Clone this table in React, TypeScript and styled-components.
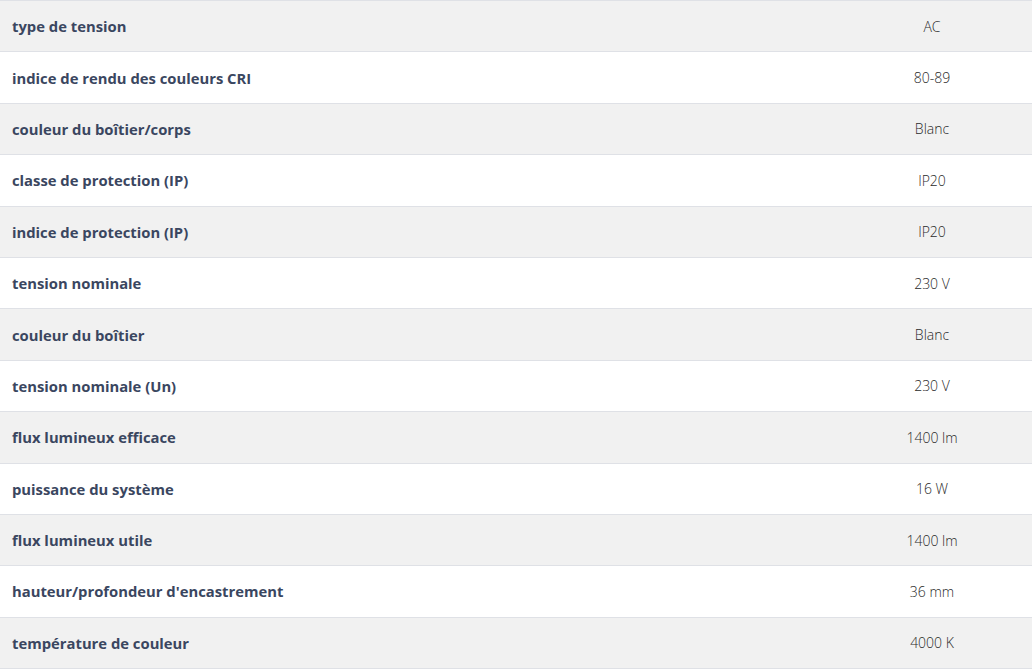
import React from "react";
import styled, { createGlobalStyle } from "styled-components";

const Global = createGlobalStyle`
  html, body { margin: 0; padding: 0; background: #fff; }
  body { font-family: "Open Sans", "Noto Sans", Arial, sans-serif; }
`;

const Table = styled.div`
  width: 1032px;
  border-top: 1px solid #dfe1e6;
`;

const Row = styled.div<{ $alt: boolean }>`
  display: grid;
  grid-template-columns: 832px 200px;
  align-items: center;
  height: 50.4px;
  background: ${(p) => (p.$alt ? "#f1f1f1" : "#ffffff")};
  border-bottom: 1px solid #dfe1e6;
  box-sizing: content-box;
`;

const Label = styled.div`
  padding-left: 12px;
  font-size: 14.8px;
  font-weight: 700;
  color: #3a4660;
  white-space: nowrap;
`;

const Value = styled.div`
  text-align: center;
  font-size: 14px;
  font-weight: 300;
  color: #2a2a2a;
  white-space: nowrap;
`;

const rows: [string, string][] = [
  ["type de tension", "AC"],
  ["indice de rendu des couleurs CRI", "80-89"],
  ["couleur du boîtier/corps", "Blanc"],
  ["classe de protection (IP)", "IP20"],
  ["indice de protection (IP)", "IP20"],
  ["tension nominale", "230 V"],
  ["couleur du boîtier", "Blanc"],
  ["tension nominale (Un)", "230 V"],
  ["flux lumineux efficace", "1400 lm"],
  ["puissance du système", "16 W"],
  ["flux lumineux utile", "1400 lm"],
  ["hauteur/profondeur d'encastrement", "36 mm"],
  ["température de couleur", "4000 K"],
];

export default function App() {
  return (
    <>
      <Global />
      <Table>
        {rows.map(([l, v], i) => (
          <Row key={i} $alt={i % 2 === 0}>
            <Label>{l}</Label>
            <Value>{v}</Value>
          </Row>
        ))}
      </Table>
    </>
  );
}
